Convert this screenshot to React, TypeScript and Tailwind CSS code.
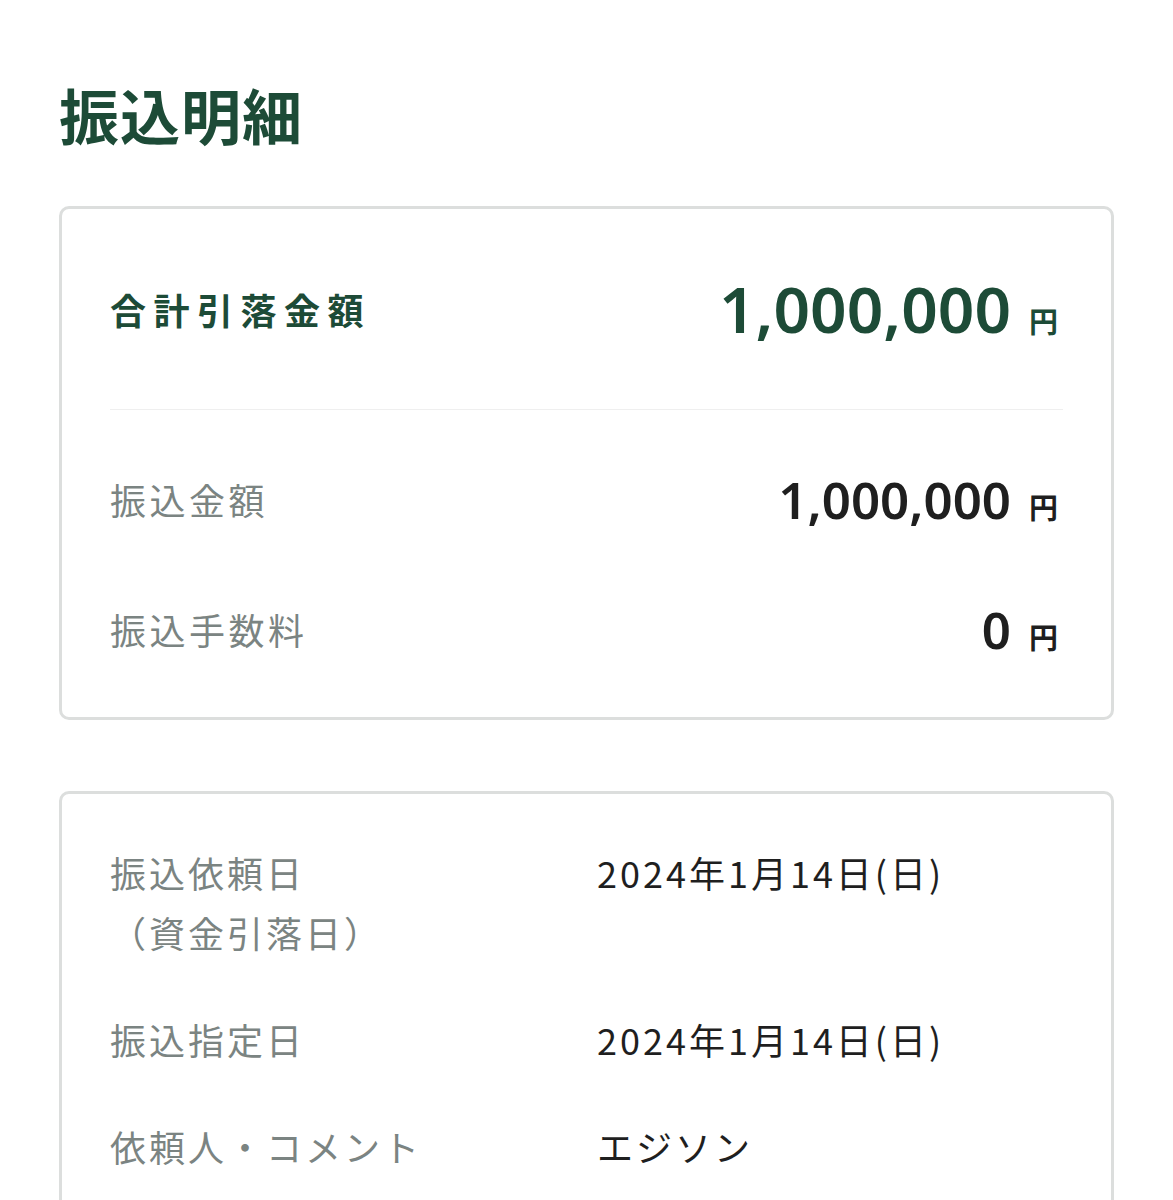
const font = { fontFamily: '"Noto Sans CJK JP", "Noto Sans", sans-serif' };
const digits = { fontFamily: '"Noto Sans", "Noto Sans CJK JP", sans-serif' };

type Row = { label: string[]; value: string };

const details: Row[] = [
  { label: ["振込依頼日", "（資金引落日）"], value: "2024年1月14日(日)" },
  { label: ["振込指定日"], value: "2024年1月14日(日)" },
  { label: ["依頼人・コメント"], value: "エジソン" },
];

const Yen = ({ amount, big }: { amount: string; big?: boolean }) => (
  <div className="flex items-baseline gap-[18px] pr-[5px]">
    <span
      style={digits}
      className={
        big
          ? "text-[64px] font-semibold text-[#1d4b37] leading-none"
          : "text-[51px] font-semibold text-[#1f1f1f] leading-none"
      }
    >
      {amount}
    </span>
    <span className={`text-[29px] font-bold leading-none ${big ? "text-[#1d4b37]" : "text-[#1f1f1f]"}`}>円</span>
  </div>
);

export default function App() {
  return (
    <div className="min-h-screen w-full bg-white px-[59px] pt-[69px] pb-10" style={font}>
      <h1 className="text-[60px] font-bold leading-[90px] text-[#1d4b37] tracking-[1px]">振込明細</h1>

      <div className="mt-[47px] rounded-[10px] border-[3px] border-[#dcdedd] px-[48px]">
        <div className="flex h-[201px] items-center justify-between border-b border-[#efefef]">
          <span className="text-[36px] font-bold tracking-[7.5px] text-[#1d4b37]">合計引落金額</span>
          <Yen amount="1,000,000" big />
        </div>
        <div className="flex flex-col gap-[70px] pt-[59px] pb-[58px]">
          <div className="flex h-[60px] items-center justify-between">
            <span className="text-[36px] tracking-[3.5px] text-[#7b8482]">振込金額</span>
            <Yen amount="1,000,000" />
          </div>
          <div className="flex h-[60px] items-center justify-between">
            <span className="text-[36px] tracking-[3.5px] text-[#7b8482]">振込手数料</span>
            <Yen amount="0" />
          </div>
        </div>
      </div>

      <div className="mt-[71px] rounded-[10px] border-[3px] border-[#dcdedd] px-[48px] pt-[48px] pb-[48px]">
        <div className="flex flex-col gap-[47px]">
          {details.map((row) => (
            <div key={row.value + row.label[0]} className="flex">
              <div className="w-[487px] shrink-0 text-[36px] leading-[60px] tracking-[3px] text-[#7b8482]">
                {row.label.map((l) => (
                  <div key={l}>{l}</div>
                ))}
              </div>
              <div className="text-[36px] leading-[60px] tracking-[3px] text-[#1f1f1f]">{row.value}</div>
            </div>
          ))}
        </div>
      </div>
    </div>
  );
}
